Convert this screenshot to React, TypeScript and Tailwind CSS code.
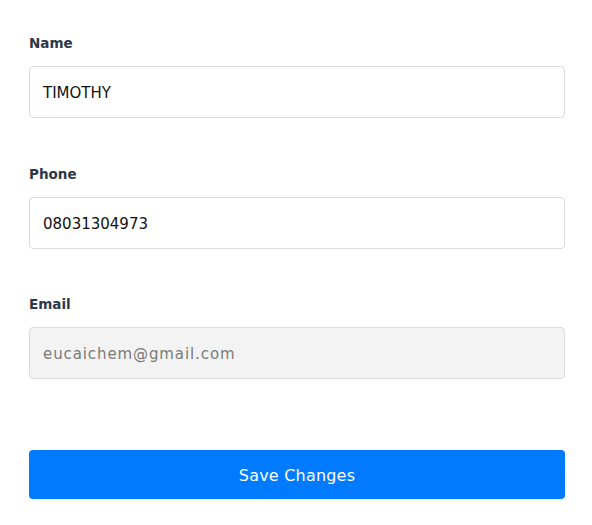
import React from "react";

const font = { fontFamily: '"DejaVu Sans", "Open Sans", sans-serif' };

function Field({ label, value, disabled, className }: { label: string; value: string; disabled?: boolean; className?: string }) {
  return (
    <div className={`flex flex-col ${className ?? ""}`}>
      <label className="h-5 pt-[1px] text-[13.5px] font-bold leading-5 text-[#2d3748]">{label}</label>
      <div
        className={`mt-[14px] flex h-[52px] items-center rounded-[4px] border border-[#dcdcdc] px-[13px] pt-[3px] text-[15px] ${
          disabled ? "bg-[#f3f3f3] tracking-[0.9px] text-[#7a7a7a]" : "bg-white text-[#111111]"
        }`}
      >
        {value}
      </div>
    </div>
  );
}

export default function App() {
  return (
    <div className="min-h-[525px] w-[592px] bg-white px-[29px] pt-[32px]" style={font}>
      <div className="w-[536px]">
        <Field label="Name" value="TIMOTHY" />
        <Field label="Phone" value="08031304973" className="mt-[45px]" />
        <Field label="Email" value="eucaichem@gmail.com" disabled className="mt-[44px]" />
        <button className="mt-[71px] flex h-[49px] w-full items-center justify-center rounded-[4px] bg-[#007bff] pt-[3px] text-[16px] tracking-[0.2px] text-white">
          Save Changes
        </button>
      </div>
    </div>
  );
}
